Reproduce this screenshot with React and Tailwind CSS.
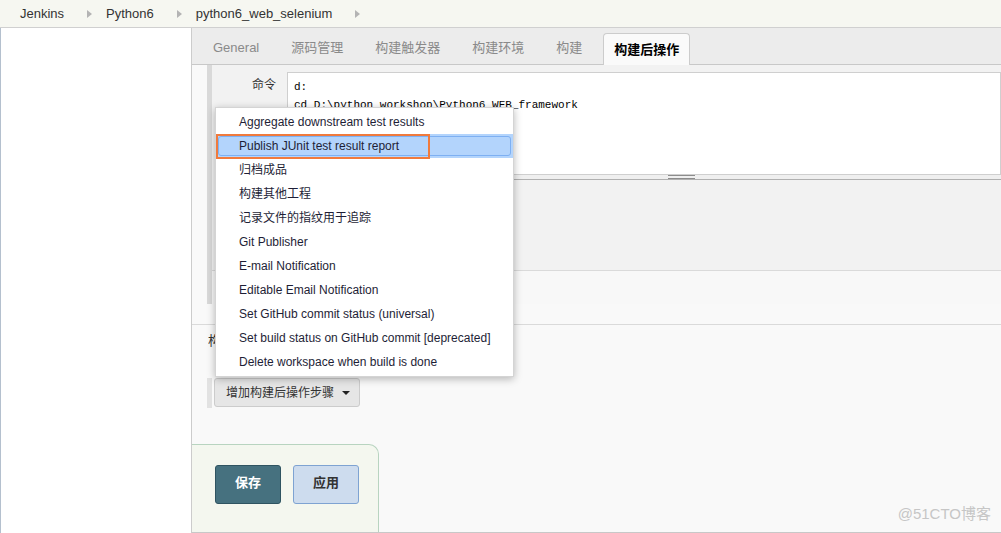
export default function App() {
  const items = [
    "Aggregate downstream test results",
    "Publish JUnit test result report",
    "归档成品",
    "构建其他工程",
    "记录文件的指纹用于追踪",
    "Git Publisher",
    "E-mail Notification",
    "Editable Email Notification",
    "Set GitHub commit status (universal)",
    "Set build status on GitHub commit [deprecated]",
    "Delete workspace when build is done",
  ];
  const tabs = ["General", "源码管理", "构建触发器", "构建环境", "构建"];
  const crumbs = ["Jenkins", "Python6", "python6_web_selenium"];
  return (
    <div className="relative w-[1001px] h-[533px] overflow-hidden bg-white text-[#333] font-['Liberation_Sans','Noto_Sans_CJK_SC',sans-serif]">
      {/* breadcrumb */}
      <div className="h-[28px] flex items-center bg-[#f6f7f1] border-b border-[#d0d0d0] pl-[20px] text-[13px] text-[#333]">
        {crumbs.map((c) => (
          <div key={c} className="flex items-center">
            <span>{c}</span>
            <span className="ml-[23px] mr-[14px] w-0 h-0 border-y-[4px] border-y-transparent border-l-[5px] border-l-[#b4b4b4]" />
          </div>
        ))}
      </div>

      <div className="flex h-[505px]">
        {/* sidebar */}
        <div className="w-[192px] shrink-0 bg-white border-l border-l-[#b4c0ce] border-r border-r-[#cccccc]" />

        {/* main */}
        <div className="flex-1 flex flex-col bg-[#f9f9f9] border-b border-[#c8c8c8]">
          {/* tabs */}
          <div className="h-[37px] shrink-0 bg-[#ececec] border-b border-[#c8c8c8] flex items-end pl-[5px] text-[13px]">
            {tabs.map((t) => (
              <div key={t} className="h-[32px] flex items-center px-[16px] text-[#8a8a8a]">
                {t}
              </div>
            ))}
            <div className="h-[32px] -mb-px ml-[5px] px-[10px] flex items-center bg-[#fafafa] border border-[#cccccc] border-b-0 rounded-t-[4px] font-bold text-black">
              构建后操作
            </div>
          </div>

          {/* build step section */}
          <div className="ml-[15px] border-l-[5px] border-[#d9d9d9] flex flex-col shrink-0">
            <div className="h-[206px] bg-[#f2f2f2] border-b border-[#dadada] pt-[7px] pl-[1px] flex flex-col">
              <div className="flex">
                <div className="w-[74px] shrink-0 text-right pr-[11px] pt-[4px] text-[12px] leading-[18px] text-[#333]">命令</div>
                <div className="flex-1 flex flex-col">
                  <div className="h-[103px] bg-white border border-[#cfcfcf] pl-[6px] pt-[5px] font-['Liberation_Mono',monospace] text-[11px] leading-[18px] text-black whitespace-pre">
                    <div>d:</div>
                    <div>{"cd D:\\python_workshop\\Python6_WEB_framework"}</div>
                  </div>
                  <div className="h-[5px] bg-[#efefef] border-b border-[#b0b0b0] pl-[381px]">
                    <div className="w-[27px] h-[4px] border-t border-b border-[#8c8c8c]" />
                  </div>
                </div>
              </div>
            </div>
            <div className="h-[33px] bg-[#f8f8f8]" />
          </div>
          <div className="h-[21px] shrink-0 border-b border-[#dadada]" />

          {/* post-build heading (mostly hidden behind the menu) */}
          <div className="h-[53px] shrink-0 pl-[16px] pt-[8px]">
            <div className="w-[7px] overflow-hidden whitespace-nowrap text-[13px] leading-[16px] text-[#333]">构建后操作</div>
          </div>

          {/* add button */}
          <div className="h-[30px] shrink-0 flex ml-[15px]">
            <div className="w-[5px] bg-[#e2e2e2]" />
            <button className="ml-[2px] h-[29px] flex items-center pl-[11px] pr-[9px] bg-[#e6e6e6] border border-[#cccccc] rounded-[3px] text-[12px] text-[#333]">
              增加构建后操作步骤
              <span className="ml-[8px] w-0 h-0 border-x-[4px] border-x-transparent border-t-[4px] border-t-[#222]" />
            </button>
          </div>

          <div className="h-[36px] shrink-0" />

          {/* save bar */}
          <div className="flex-1 w-[187px] bg-[#f4f7ef] border-t border-r border-[#b8d4c0] rounded-tr-[10px] pl-[23px] pt-[20px] flex items-start">
            <button className="w-[66px] h-[39px] pb-[3px] bg-[#46717f] border border-[#2f5461] rounded-[3px] text-white font-bold text-[13px]">保存</button>
            <button className="ml-[12px] w-[66px] h-[39px] pb-[3px] bg-[#cddcee] border border-[#7ea3d2] rounded-[3px] text-[#333] font-bold text-[13px]">应用</button>
          </div>
        </div>
      </div>

      {/* dropdown menu */}
      <div className="absolute left-[215px] top-[107px] w-[299px] bg-white border border-[#d4d4d4] shadow-[0_2px_8px_rgba(0,0,0,0.28)] py-[2px]">
        {items.map((t, i) => (
          <div
            key={t}
            className={
              i === 1
                ? "relative h-[24px] flex items-center pl-[23px] text-[12px] text-[#1e1e36] bg-[#b3d4fc]"
                : "relative h-[24px] flex items-center pl-[23px] text-[12px] text-[#1e1e36]"
            }
          >
            {i === 1 && <span className="absolute inset-[2px] border border-[#7eb0f2] rounded-[3px]" />}
            <span className="relative">{t}</span>
          </div>
        ))}
      </div>

      {/* orange annotation */}
      <div className="absolute left-[216px] top-[134px] w-[214px] h-[25px] border-2 border-[#f07a3c]" />

      {/* watermark */}
      <div className="absolute right-[10px] bottom-[8px] text-[15px] text-[#c6c6c6]">@51CTO博客</div>
    </div>
  );
}
